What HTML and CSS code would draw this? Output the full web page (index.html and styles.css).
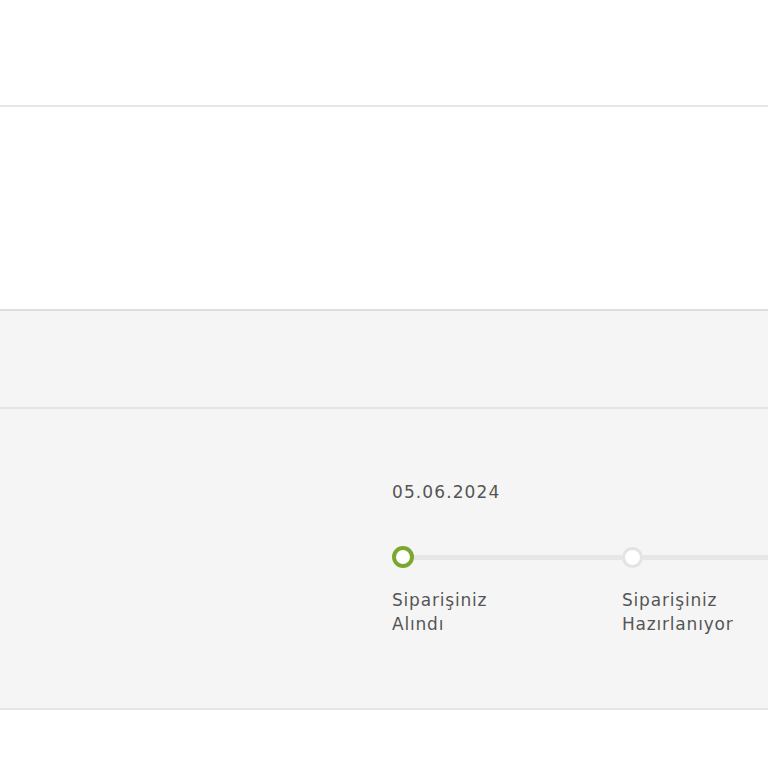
FILE: index.html
```html
<!DOCTYPE html>
<html lang="tr">
<head>
<meta charset="utf-8">
<title>Sipariş Takibi</title>
<link rel="stylesheet" href="styles.css">
</head>
<body>
<div class="page">
  <header class="top"></header>
  <div class="blank"></div>
  <section class="order">
    <div class="order-head"></div>
    <div class="order-body">
      <div class="date">05.06.2024</div>
      <div class="steps">
        <div class="step done">
          <div class="track"><span class="dot"></span><span class="bar"></span></div>
          <div class="label">Siparişiniz<br>Alındı</div>
        </div>
        <div class="step">
          <div class="track"><span class="dot"></span><span class="bar"></span></div>
          <div class="label">Siparişiniz<br>Hazırlanıyor</div>
        </div>
      </div>
    </div>
  </section>
</div>
</body>
</html>
```
FILE: styles.css
```css
html, body {
  margin: 0;
  padding: 0;
  background: #ffffff;
  overflow: hidden;
}
body {
  font-family: "DejaVu Sans", Verdana, sans-serif;
  color: #555555;
}
.page {
  width: 768px;
  overflow: hidden;
}
.top {
  height: 105px;
  border-bottom: 2px solid #e6e6e6;
}
.blank {
  height: 202px;
}
.order {
  background: #f5f5f5;
  border-top: 2px solid #dddddd;
  border-bottom: 2px solid #e6e6e6;
}
.order-head {
  height: 96px;
  border-bottom: 2px solid #e4e4e4;
}
.order-body {
  padding: 73px 0 0 392px;
  height: 299px;
  box-sizing: border-box;
}
.date {
  font-size: 17px;
  line-height: 20px;
  letter-spacing: 1.1px;
  color: #555555;
}
.steps {
  display: flex;
  margin-top: 44px;
  width: 1000px;
}
.step {
  flex: 0 0 230px;
  display: flex;
  flex-direction: column;
}
.track {
  display: flex;
  align-items: center;
  height: 22px;
}
.dot {
  flex: 0 0 auto;
  width: 15px;
  height: 15px;
  border-radius: 50%;
  background: #ffffff;
  border: 3px solid #e3e3e3;
}
.step.done .dot {
  width: 14px;
  height: 14px;
  border: 4px solid #7aa82e;
}
.bar {
  flex: 1 1 auto;
  height: 5px;
  background: #e6e6e6;
}
.label {
  margin-top: 20px;
  font-size: 17px;
  line-height: 24px;
  letter-spacing: 0.8px;
  color: #555555;
  white-space: nowrap;
}
```
